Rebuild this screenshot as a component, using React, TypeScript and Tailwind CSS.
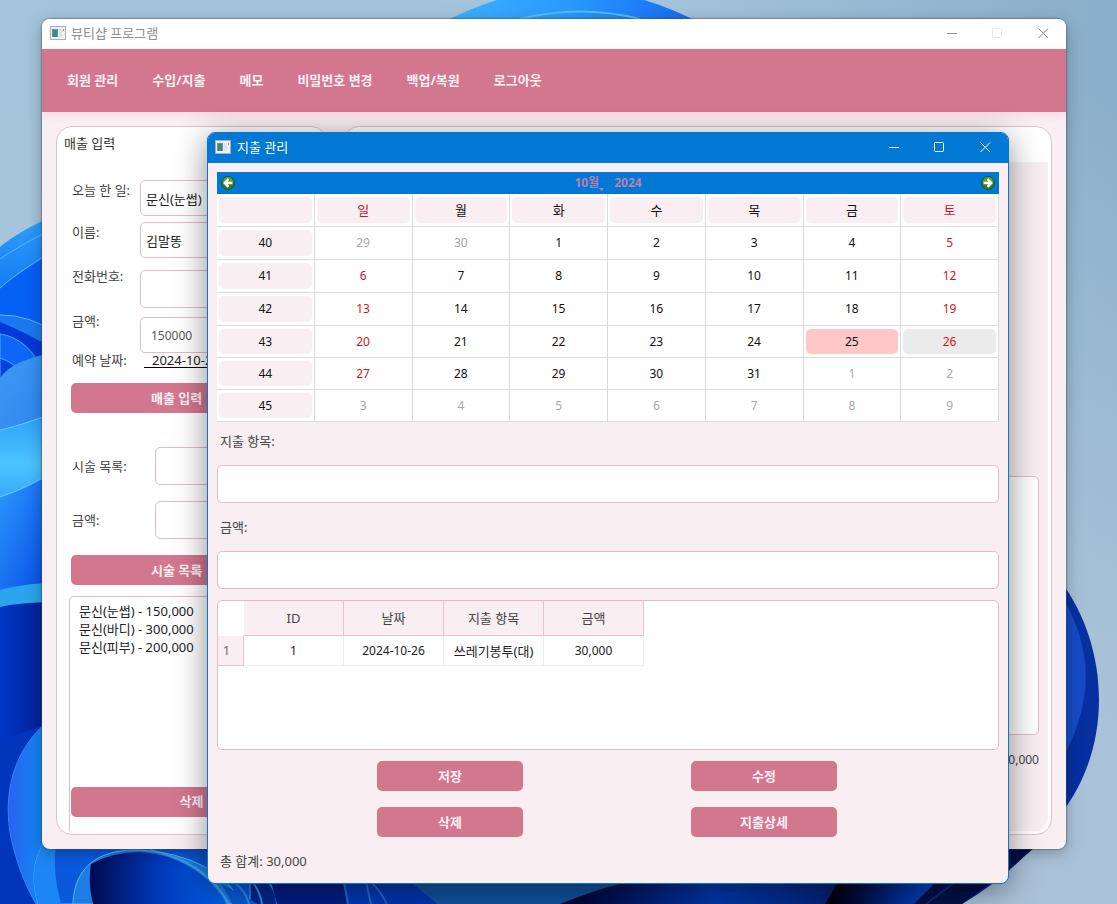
import React, { useState } from 'react';

type Expense = { id: number; date: string; item: string; amount: number }
type Treatment = { name: string; price: number }

const MENU = ['회원 관리', '수입/지출', '메모', '비밀번호 변경', '백업/복원', '로그아웃']
const DAYS = ['일', '월', '화', '수', '목', '금', '토']

const TREATMENTS: Treatment[] = [
  { name: '문신(눈썹)', price: 150000 },
  { name: '문신(바디)', price: 300000 },
  { name: '문신(피부)', price: 200000 },
]

const EXPENSES: Expense[] = [
  { id: 1, date: '2024-10-26', item: '쓰레기봉투(대)', amount: 30000 },
]

// six weeks, starting on sunday 29 september
const WEEKS = [40, 41, 42, 43, 44, 45].map((week, row) => ({
  week,
  days: DAYS.map((_, col) => {
    const n = row * 7 + col - 1
    if (n < 1) return { day: n + 30, outside: true }
    if (n > 31) return { day: n - 31, outside: true }
    return { day: n, outside: false }
  }),
}))

const pinkButton = 'h-[30px] rounded-[5px] bg-[#d3778e] text-[13px] font-bold text-[#fdf0f4] hover:bg-[#c4677f]'
const field = 'min-w-0 rounded-[5px] border border-[#e0bcc8] bg-white text-[13px] text-[#222] outline-none'

function Wallpaper() {
  return (
    <svg className="absolute inset-0 h-full w-full" viewBox="0 0 1117 904" preserveAspectRatio="xMidYMid slice" aria-hidden="true">
      <defs>
        <linearGradient id="sky" x1="0" y1="0" x2="1" y2="0">
          <stop offset="0" stopColor="#a3c4da" />
          <stop offset="0.6" stopColor="#a3c3da" />
          <stop offset="1" stopColor="#89aecb" />
        </linearGradient>
        <linearGradient id="haze" x1="0" y1="0" x2="0" y2="1">
          <stop offset="0.1" stopColor="#b3c9dd" stopOpacity="0" />
          <stop offset="0.8" stopColor="#aac2d8" />
        </linearGradient>
        <linearGradient id="crown" x1="0" y1="0" x2="1" y2="0">
          <stop offset="0" stopColor="#3cb4ff" />
          <stop offset="0.5" stopColor="#2a98ff" />
          <stop offset="1" stopColor="#1667f0" />
        </linearGradient>
        <linearGradient id="petalA" x1="0" y1="0" x2="0" y2="1">
          <stop offset="0" stopColor="#2da2fb" />
          <stop offset="1" stopColor="#0355f0" />
        </linearGradient>
        <linearGradient id="petalB" x1="0" y1="0" x2="1" y2="1">
          <stop offset="0" stopColor="#3d9bf2" />
          <stop offset="1" stopColor="#2a7fee" />
        </linearGradient>
        <linearGradient id="petalC" x1="0" y1="0" x2="0" y2="1">
          <stop offset="0" stopColor="#2b9df8" />
          <stop offset="0.6" stopColor="#4cc4ff" />
          <stop offset="1" stopColor="#38a8f8" />
        </linearGradient>
        <linearGradient id="petalD" x1="0" y1="0" x2="1" y2="1">
          <stop offset="0" stopColor="#2e9cff" />
          <stop offset="1" stopColor="#003fe0" />
        </linearGradient>
        <linearGradient id="petalE" x1="0" y1="0" x2="1" y2="0">
          <stop offset="0" stopColor="#0036c8" />
          <stop offset="1" stopColor="#001a80" />
        </linearGradient>
        <linearGradient id="petalF" x1="0" y1="0" x2="1" y2="0">
          <stop offset="0" stopColor="#2a62ee" />
          <stop offset="0.5" stopColor="#0f8af5" />
          <stop offset="1" stopColor="#0a5ce8" />
        </linearGradient>
        <linearGradient id="cavity" x1="0" y1="0" x2="1" y2="0">
          <stop offset="0" stopColor="#000a50" />
          <stop offset="0.5" stopColor="#0038b8" />
          <stop offset="1" stopColor="#0060e8" />
        </linearGradient>
        <linearGradient id="floor" x1="0" y1="0" x2="1" y2="0">
          <stop offset="0" stopColor="#00042a" />
          <stop offset="0.2" stopColor="#001158" />
          <stop offset="0.55" stopColor="#0038ac" />
          <stop offset="0.8" stopColor="#002c90" />
          <stop offset="1" stopColor="#002070" />
        </linearGradient>
        <linearGradient id="floorEnd" x1="0" y1="0" x2="1" y2="0">
          <stop offset="0" stopColor="#000006" />
          <stop offset="0.25" stopColor="#000830" />
          <stop offset="0.7" stopColor="#00309c" />
          <stop offset="1" stopColor="#0a48c4" />
        </linearGradient>
      </defs>
      <rect width="1117" height="904" fill="url(#sky)" />
      <rect width="1117" height="904" fill="url(#haze)" />

      {/* top petal */}
      <path d="M440 24 Q570 -46 702 24Z" fill="url(#crown)" />
      <path d="M520 19 Q580 4 640 19" fill="none" stroke="#4fc0ff" strokeWidth="2" />

      {/* left side */}
      <path d="M0 247 Q20 230 60 213V360H0Z" fill="url(#petalA)" />
      <path d="M0 259 Q20 245 60 225M0 288 Q20 270 60 247" fill="none" stroke="#58b8ff" strokeWidth="1" />
      <path d="M0 289 Q20 271 60 248V330H0Z" fill="#0560f4" />
      <path d="M0 315 Q28 314 60 335V380H0Z" fill="#1c78f0" />
      <path d="M0 315 Q28 314 60 335" fill="none" stroke="#58b8ff" strokeWidth="1" />
      <path d="M0 322 Q25 332 60 352V380H0Z" fill="#0138d8" />
      <path d="M0 334 Q28 338 44 372L0 390Z" fill="#0f66f4" stroke="#46aaff" strokeWidth="1" />
      <path d="M0 358 Q14 362 24 376L0 390Z" fill="#0042e0" stroke="#46aaff" strokeWidth="1" />
      <path d="M0 378 Q14 358 60 352V440H0Z" fill="url(#petalB)" />
      <path d="M0 430 Q24 425 60 410V500H0Z" fill="url(#petalC)" />
      <path d="M0 497 Q28 488 60 468V600H0Z" fill="url(#petalD)" />
      <path d="M0 497 Q28 488 60 468M0 430 Q24 425 60 410" fill="none" stroke="#5cd0ff" strokeWidth="1" />
      <path d="M0 590 Q20 584 60 582V620H0Z" fill="#2aa4ec" />
      <path d="M0 607 Q22 602 60 602V904H0Z" fill="url(#petalE)" />

      {/* right side */}
      <path d="M1060 580 C1112 650 1112 750 1060 815 Q1020 870 962 904 H930 L1000 840Z" fill="#0630a0" />
      <path d="M1060 592 C1094 650 1094 700 1062 760Z" fill="#164ac4" />

      {/* bottom strip */}
      <path d="M0 740H1010V870L962 904H0Z" fill="#00268c" />
      <path d="M0 740 L60 720 V904 H0Z" fill="#0036bc" />
      <path d="M60 712 C10 745 0 800 14 850 Q22 880 36 904H80V712Z" fill="url(#petalF)" stroke="#3a84f4" strokeWidth="1" />
      <path d="M44 843 C32 862 32 882 38 904H250V843Z" fill="#0a58dc" stroke="#50b4ff" strokeWidth="1" />
      <path d="M44 843 C32 862 32 882 38 904H61Q52 872 56 843Z" fill="#1e86f4" />
      <path d="M73 904 C74 866 100 849 138 850 C190 852 232 876 240 904Z" fill="#1c7ee4" stroke="#58b8f8" strokeWidth="1" />
      <path d="M93 904 C88 884 90 870 91 864 Q112 852 140 852 C182 854 214 880 226 904Z" fill="url(#cavity)" />
      <path d="M150 850 Q206 862 229 904" fill="none" stroke="#3fa0f0" strokeWidth="2" />
      <path d="M180 849 H215V880L258 904H232Q216 866 180 849Z" fill="#0a5ad4" />
      <path d="M236 884 Q246 892 249 904M254 884 Q260 892 262 904M270 884 Q276 892 277 904" fill="none" stroke="#2f8ce8" strokeWidth="2" />
      <path d="M277 904 L271 882 H345 L348 904Z" fill="#001e84" />
      <path d="M344 882 L348 904H387Q384 890 371 882Z" fill="#0038b4" />
      <path d="M344 882 L348 904M366 882 L371 904M371 882 Q380 890 387 904M411 882 Q424 892 438 904" fill="none" stroke="#2468d0" strokeWidth="2" />
      <path d="M376 882 H411 Q424 892 438 904H388Z" fill="#0034b0" />
      <path d="M438 904 Q424 892 412 882 H628 L560 904Z" fill="#11529f" />
      <path d="M560 904 Q600 888 628 882 H840 L826 904Z" fill="url(#floor)" />
      <path d="M838 882 H936 L914 904 H825Z" fill="url(#floorEnd)" />
      <path d="M936 882 L914 904 H962 L1008 870 L1034 848H1000Z" fill="#001048" />
      <path d="M955 882 L926 904" stroke="#0a2c80" strokeWidth="2" />
    </svg>
  )
}

function WindowIcon() {
  return (
    <svg width="16" height="14" viewBox="0 0 16 14" aria-hidden="true">
      <rect x="0.5" y="0.5" width="15" height="13" fill="#eef2f4" stroke="#a9b0b6" />
      <rect x="2" y="3" width="6" height="8" fill="#6c8fa6" />
      <rect x="3" y="4" width="4" height="7" fill="#3f8a7c" />
      <rect x="9" y="3" width="3" height="8" fill="#dde3e6" />
      <rect x="13" y="3" width="1" height="2" fill="#8b9298" />
    </svg>
  )
}

function WindowControls({ maxClass }: { maxClass: string }) {
  return (
    <div className="flex h-full">
      <button aria-label="최소화" className="flex w-[46px] items-center justify-center">
        <svg width="11" height="11" viewBox="0 0 11 11" stroke="currentColor" fill="none"><path d="M1 5.5H11" /></svg>
      </button>
      <button aria-label="최대화" className={`flex w-[46px] items-center justify-center ${maxClass}`}>
        <svg width="11" height="11" viewBox="0 0 11 11" stroke="currentColor" fill="none"><rect x="0.5" y="0.5" width="9" height="9" rx="1" /></svg>
      </button>
      <button aria-label="닫기" className="flex w-[46px] items-center justify-center">
        <svg width="11" height="11" viewBox="0 0 11 11" stroke="currentColor" fill="none"><path d="M0.5 0.5L10 10M10 0.5L0.5 10" /></svg>
      </button>
    </div>
  )
}

function ArrowIcon({ back }: { back?: boolean }) {
  return (
    <svg width="14" height="14" viewBox="0 0 14 14" aria-hidden="true">
      <circle cx="7" cy="7" r="6.5" fill="#2f7d2a" stroke="#1d5c30" />
      <path d="M2 6a5 5 0 0 1 10 0Z" fill="#57a03f" />
      {back
        ? <path d="M7.5 3.2L3.7 7L7.5 10.8M4 7H11.5" fill="none" stroke="#fff" strokeWidth="2.4" />
        : <path d="M6.5 3.2L10.3 7L6.5 10.8M10 7H2.5" fill="none" stroke="#fff" strokeWidth="2.4" />}
    </svg>
  )
}

function SalesCard() {
  return (
    <section className="flex w-[271px] shrink-0 flex-col rounded-[16px] border border-[#e0c4cd] bg-white pb-[3px]">
      <h2 className="px-[7px] pt-[6px] text-[13px] leading-5 text-[#333]">매출 입력</h2>
      <div className="flex flex-1 flex-col px-[14px] pt-[27px] text-[13px] leading-5 text-[#444]">
        <div className="flex">
          <label htmlFor="work" className="w-[69px] pl-px">오늘 한 일:</label>
          <input id="work" defaultValue="문신(눈썹)" className={`${field} h-[36px] flex-1 px-[5px]`} />
        </div>
        <div className="mt-[6px] flex">
          <label htmlFor="name" className="w-[69px] pl-px">이름:</label>
          <input id="name" defaultValue="김말똥" className={`${field} h-[36px] flex-1 px-[5px]`} />
        </div>
        <div className="mt-2 flex">
          <label htmlFor="phone" className="w-[69px] pl-px">전화번호:</label>
          <input id="phone" className={`${field} mt-1 h-[38px] flex-1 px-[10px]`} />
        </div>
        <div className="mt-[3px] flex">
          <label htmlFor="price" className="w-[69px] pl-px">금액:</label>
          <input id="price" defaultValue="150000" className="mt-[6px] h-[36px] min-w-0 flex-1 rounded-[5px] border border-[#e0bcc8] bg-white px-[10px] text-[12px] text-[#555] outline-none" />
        </div>
        <div className="flex leading-[14px]">
          <label htmlFor="reserve" className="w-[73px] pl-px">예약 날짜:</label>
          <input id="reserve" defaultValue="2024-10-26" className="h-[15px] min-w-0 flex-1 border-b border-black pl-[8px] text-[13px] text-[#222] outline-none" />
        </div>
        <button className={`${pinkButton} mt-[15px] pl-[80px] text-left`}>매출 입력</button>

        <div className="mt-[34px] flex items-center">
          <label htmlFor="treatment" className="w-[84px] pl-px">시술 목록:</label>
          <input id="treatment" className={`${field} h-[38px] flex-1 px-[10px]`} />
        </div>
        <div className="mt-4 flex items-center">
          <label htmlFor="treatment-price" className="w-[84px] pl-px">금액:</label>
          <input id="treatment-price" className={`${field} h-[38px] flex-1 px-[10px]`} />
        </div>
        <button className={`${pinkButton} mt-4 pl-[80px] text-left`}>시술 목록</button>
      </div>
      <div className="mx-[12px] mt-[11px] flex h-[235px] flex-col justify-between rounded-t-[5px] border border-b-0 border-[#e0bcc8] px-px pt-[5px] pb-[14px]">
        <ul className="pl-2 text-[13px] leading-[18px] text-[#222]">
          {TREATMENTS.map((t) => (
            <li key={t.name}>{t.name} - {t.price.toLocaleString()}</li>
          ))}
        </ul>
        <button className={pinkButton}>삭제</button>
      </div>
    </section>
  )
}

function MainWindow() {
  return (
    <main className="relative col-start-1 row-start-1 mt-[19px] mr-[51px] mb-[55px] ml-[42px] flex flex-col self-start overflow-hidden rounded-[8px] bg-[#f9eff2] shadow-[0_0_1px_1px_rgba(60,70,90,0.4),0_4px_16px_rgba(0,0,0,0.28)]">
      <header className="flex h-[30px] items-center justify-between bg-white pb-[2px] text-[#8e8e8e]">
        <div className="flex items-center gap-[5px] pl-2">
          <WindowIcon />
          <span className="text-[13px] leading-5">뷰티샵 프로그램</span>
        </div>
        <WindowControls maxClass="text-[#e6e6e6]" />
      </header>
      <nav className="relative flex h-[63px] items-center gap-[34px] bg-[#d3778e] pl-[25px] shadow-[0_3px_8px_rgba(255,170,200,0.35)]">
        {MENU.map((m) => (
          <a key={m} href="#" className="text-[13px] font-bold whitespace-nowrap text-[#fdf0f4]">{m}</a>
        ))}
      </nav>
      <div className="flex gap-4 px-[14px] pt-[14px] pb-[14px]">
        <SalesCard />
        <section className="flex flex-1 flex-col rounded-[16px] border border-[#e0c4cd] bg-white p-[3px] pt-[35px]">
          <div className="flex flex-1 flex-col items-stretch rounded-b-[12px] bg-[#f9eff2] px-[9px] pb-[61px]">
            <div className="mt-auto h-[259px] rounded-[5px] border border-[#e0bcc8] bg-white" />
            <p className="mt-[15px] text-right text-[12px] leading-5 text-[#444]">0,000</p>
          </div>
        </section>
      </div>
    </main>
  )
}

function Calendar() {
  const [selected, setSelected] = useState(26)

  const dayColor = (col: number, outside: boolean) => {
    if (outside) return 'text-[#a8a8a8]'
    return col === 0 || col === 6 ? 'text-[#d4141c]' : 'text-[#111]'
  }

  const dayFill = (day: number, outside: boolean) => {
    if (outside) return ''
    if (day === selected) return 'bg-[#ebebeb]'
    return day === 25 ? 'bg-[#ffc8c8]' : ''
  }

  return (
    <div>
      <div className="flex h-[22px] items-center justify-between bg-[#0078d4] px-1">
        <button aria-label="이전 달"><ArrowIcon back /></button>
        <div className="flex gap-[10px] text-[12px] font-bold text-[#bd80a8]">
          <button className="flex items-end">
            10월
            <svg width="5" height="3" viewBox="0 0 5 3" className="mb-[2px]" aria-hidden="true"><path d="M0 0H5L2.5 3Z" fill="currentColor" /></svg>
          </button>
          <button>2024</button>
        </div>
        <button aria-label="다음 달"><ArrowIcon /></button>
      </div>
      <table className="w-full table-fixed border-separate border-spacing-0 bg-white text-center text-[12px] text-[#111]">
        <thead>
          <tr>
            <td className="border-r border-b border-[#dcdcdc] px-[2px] py-[3px]"><div className="h-[26px] rounded-[5px] bg-[#f9eff2]" /></td>
            {DAYS.map((d, i) => (
              <th key={d} className="border-r border-b border-[#dcdcdc] px-[2px] py-[3px] font-normal">
                <div className={`h-[26px] rounded-[5px] bg-[#f9eff2] text-[13px] leading-[26px] ${dayColor(i, false)}`}>{d}</div>
              </th>
            ))}
          </tr>
        </thead>
        <tbody>
          {WEEKS.map(({ week, days }, row) => {
            const h = row < 3 ? 'h-[26px] leading-[26px]' : 'h-[25px] leading-[25px]'
            return (
              <tr key={week}>
                <th className="border-r border-b border-[#dcdcdc] px-[2px] py-[3px] font-normal">
                  <div className={`rounded-[5px] bg-[#f9eff2] ${h}`}>{week}</div>
                </th>
                {days.map(({ day, outside }, col) => (
                  <td key={col} className="border-r border-b border-[#dcdcdc] px-[2px] py-[3px]">
                    <button
                      onClick={() => !outside && setSelected(day)}
                      className={`block w-full rounded-[5px] ${h} ${dayColor(col, outside)} ${dayFill(day, outside)}`}
                    >
                      {day}
                    </button>
                  </td>
                ))}
              </tr>
            )
          })}
        </tbody>
      </table>
    </div>
  )
}

function ExpenseWindow() {
  const total = EXPENSES.reduce((sum, e) => sum + e.amount, 0)

  return (
    <div role="dialog" aria-label="지출 관리" className="relative col-start-1 row-start-1 mt-[132px] mr-[108px] mb-[20px] ml-[207px] self-start overflow-hidden rounded-[8px] border border-[#0078d4] bg-[#f9eff2] shadow-[0_6px_32px_rgba(0,0,0,0.45)]">
      <header className="flex h-[30px] items-center justify-between bg-[#0078d4] pb-[2px] text-white">
        <div className="flex items-center gap-[6px] pl-[7px]">
          <WindowIcon />
          <span className="text-[13px] leading-5">지출 관리</span>
        </div>
        <WindowControls maxClass="text-white" />
      </header>
      <div className="flex flex-col px-[9px] pt-[9px] pb-[12px] text-[13px] leading-5 text-[#444]">
        <Calendar />

        <label htmlFor="item" className="mt-[9px] pl-[3px]">지출 항목:</label>
        <input id="item" className={`${field} mt-[14px] h-[38px] px-[10px]`} />
        <label htmlFor="amount" className="mt-[14px] pl-[3px]">금액:</label>
        <input id="amount" className={`${field} mt-[14px] h-[38px] px-[10px]`} />

        <div className="mt-[11px] h-[150px] overflow-hidden rounded-[5px] border border-[#e0bcc8] bg-white">
          <table className="w-[426px] table-fixed border-separate border-spacing-0 text-center">
            <thead>
              <tr className="h-[35px]">
                <td className="w-[26px]" />
                {['ID', '날짜', '지출 항목', '금액'].map((h) => (
                  <th key={h} className="border-r border-b border-[#e6c3cd] bg-[#f9eff2] p-0 font-normal">{h}</th>
                ))}
              </tr>
            </thead>
            <tbody className="text-[12px] text-[#222]">
              {EXPENSES.map((e, i) => (
                <tr key={e.id} className="h-[30px]">
                  <th className="border-r border-b border-[#e6c3cd] bg-[#f9eff2] p-0 pr-2 font-normal text-[#666]">{i + 1}</th>
                  <td className="border-r border-b border-[#ececec] p-0">{e.id}</td>
                  <td className="border-r border-b border-[#ececec] p-0">{e.date}</td>
                  <td className="border-r border-b border-[#ececec] p-0 text-[13px] whitespace-nowrap">{e.item}</td>
                  <td className="border-r border-b border-[#ececec] p-0">{e.amount.toLocaleString()}</td>
                </tr>
              ))}
            </tbody>
          </table>
        </div>

        <div className="mt-[11px] grid grid-cols-[146px_146px] justify-center gap-x-[168px] gap-y-4 pr-[2px]">
          <button className={pinkButton}>저장</button>
          <button className={pinkButton}>수정</button>
          <button className={pinkButton}>삭제</button>
          <button className={pinkButton}>지출상세</button>
        </div>
        <p className="mt-[14px] pl-[3px]">총 합계: {total.toLocaleString()}</p>
      </div>
    </div>
  )
}

export default function App() {
  return (
    <div className="relative grid min-h-screen overflow-hidden bg-[#a3c3da] font-['Noto_Sans','Noto_Sans_CJK_KR',sans-serif]">
      <Wallpaper />
      <MainWindow />
      <ExpenseWindow />
    </div>
  );
}
